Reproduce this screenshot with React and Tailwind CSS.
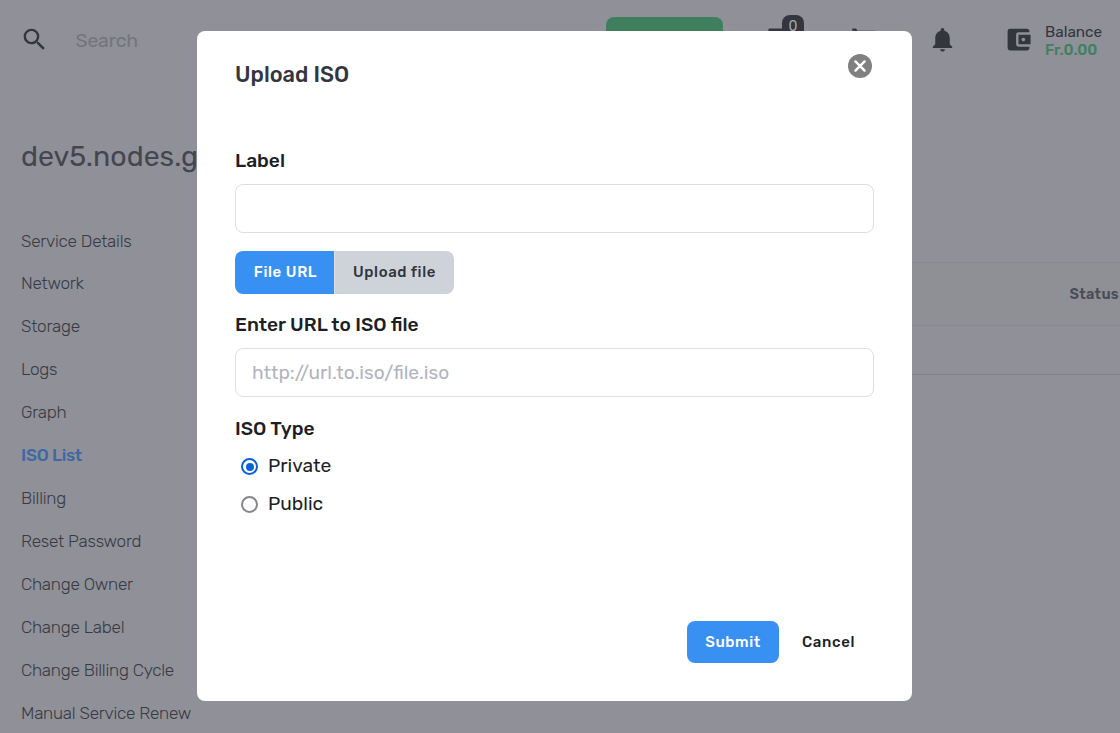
import React, { useState } from 'react';
import {
  MdSearch,
  MdForum,
  MdShoppingCart,
  MdNotifications,
  MdAccountBalanceWallet,
} from 'react-icons/md';

const menuItems = [
  'Service Details',
  'Network',
  'Storage',
  'Logs',
  'Graph',
  'ISO List',
  'Billing',
  'Reset Password',
  'Change Owner',
  'Change Label',
  'Change Billing Cycle',
  'Manual Service Renew',
];

const Header = () => (
  <header className="flex h-20 shrink-0 items-center pl-5 text-[#33363f]">
    <MdSearch size={29} className="mb-px shrink-0" />
    <span className="ml-[26.5px] w-[530.5px] pt-px text-[19.4px] tracking-[-0.15px] text-[#73757d]">Search</span>
    <button type="button" aria-label="Order" className="h-[46px] w-[117px] shrink-0 rounded-lg bg-[#407f5e]" />
    <div className="relative ml-[43px] shrink-0">
      <MdForum size={29} />
      <span className="absolute -top-[11px] left-4 flex h-6 w-[22px] justify-center rounded-lg bg-[#33363f] pt-[3px] text-[14px] leading-[18px] text-[#a3a5ab]">
        0
      </span>
    </div>
    <MdShoppingCart size={29} className="ml-14 shrink-0" />
    <MdNotifications size={29} className="mb-px ml-12 shrink-0" />
    <MdAccountBalanceWallet size={29} className="mb-px ml-[47px] shrink-0" />
    <div className="ml-3 pt-0.5 text-[15.3px] leading-[18px] whitespace-nowrap">
      <p>Balance</p>
      <p className="font-medium text-[#407f5e]">Fr.0.00</p>
    </div>
  </header>
);

const Sidebar = () => (
  <nav className="flex w-[213px] shrink-0 flex-col pt-[0.5px] pl-[21px]">
    {menuItems.map((label) => (
      <a
        key={label}
        href="#"
        className={`h-[42.95px] shrink-0 text-[17.2px] leading-[43px] tracking-[-0.26px] whitespace-nowrap ${
          label === 'ISO List' ? 'font-medium text-[#3c68a6]' : 'font-light text-[#383b43]'
        }`}
      >
        {label}
      </a>
    ))}
  </nav>
);

const IsoTable = () => (
  <div className="mt-[43px] flex-1">
    <div className="flex h-16 items-center justify-end border-y border-[#88898f] bg-[#8e9095] pt-px pr-px text-[14.5px] font-semibold tracking-[0.3px] text-[#4a4d55]">
      Status
    </div>
    <div className="h-[49px] border-b border-[#808188]" />
  </div>
);

const RadioOption = ({ label, checked, onSelect }) => (
  <label className="flex h-[38px] items-center pl-1.5 text-[19.2px] text-[#1d1f26]">
    <input
      type="radio"
      name="isoType"
      checked={checked}
      onChange={onSelect}
      className="mt-px mr-2.5 size-[17px] appearance-none rounded-full border-2 border-[#84868c] bg-clip-content p-[2.5px] checked:border-[#0b62d8] checked:bg-[#0b62d8]"
    />
    {label}
  </label>
);

const CloseIcon = () => (
  <svg width="24" height="24" viewBox="0 0 24 24" fill="none">
    <circle cx="12" cy="12" r="12" fill="#808080" />
    <path d="M7.4 7.4l9.2 9.2M16.6 7.4l-9.2 9.2" stroke="#fff" strokeWidth="2.4" strokeLinecap="round" />
  </svg>
);

const UploadModal = () => {
  const [label, setLabel] = useState('');
  const [url, setUrl] = useState('');
  const [isoType, setIsoType] = useState('Private');

  const labelClass = 'text-[19.2px] leading-9 font-medium';
  const inputClass =
    'block w-full rounded-lg border border-[#dedfe2] px-4 text-[19.1px] text-[#1d1f26] outline-none placeholder:text-[#b1b4c0]';

  return (
    <div className="fixed inset-0 flex items-start pt-[31px] pl-[197px]">
      <div className="flex h-[670px] w-[715px] flex-col rounded-lg bg-white px-[38px] text-[#1d1f26]">
        <div className="flex h-28 items-start justify-between pt-[23px]">
          <h2 className="pt-1.5 text-[21.8px] leading-[30px] font-medium text-[#33353f]">Upload ISO</h2>
          <button type="button" aria-label="Close" className="mr-[2.5px]">
            <CloseIcon />
          </button>
        </div>

        <label className={labelClass}>Label</label>
        <input value={label} onChange={(e) => setLabel(e.target.value)} className={`mt-[5px] h-[49px] ${inputClass}`} />

        <div className="mt-[18px] flex h-[43px] w-[219px] overflow-hidden rounded-lg text-[15px] font-[460]">
          <button type="button" className="w-[99px] bg-[#3990f3] pl-0.5 tracking-[0.6px] text-white">File URL</button>
          <button type="button" className="flex-1 border-l border-[#dde0e5] bg-[#ced3da] tracking-[0.6px] text-[#33353f]">
            Upload file
          </button>
        </div>

        <label className={`mt-[13px] ${labelClass}`}>Enter URL to ISO file</label>
        <input
          value={url}
          onChange={(e) => setUrl(e.target.value)}
          placeholder="http://url.to.iso/file.iso"
          className={`mt-[5px] h-[49px] ${inputClass}`}
        />

        <p className={`mt-3.5 ${labelClass}`}>ISO Type</p>
        {['Private', 'Public'].map((type) => (
          <RadioOption key={type} label={type} checked={isoType === type} onSelect={() => setIsoType(type)} />
        ))}

        <div className="mt-auto mb-[38px] flex h-[42px] justify-end text-[15px] font-[460] tracking-[0.6px]">
          <button type="button" className="w-[92px] rounded-lg bg-[#3990f3] text-white">Submit</button>
          <button type="button" className="w-[95px] pl-1">Cancel</button>
        </div>
      </div>
    </div>
  );
};

const App = () => (
  <div className="flex h-[733px] w-[1120px] flex-col overflow-hidden bg-[#8f9098] font-['Rubik','Roboto',sans-serif]">
    <Header />
    <h1 className="mt-14 shrink-0 pl-[21px] text-[28.5px] leading-10 text-[#43464e]">dev5.nodes.g</h1>
    <div className="mt-[43px] flex">
      <Sidebar />
      <IsoTable />
    </div>
    <UploadModal />
  </div>
);

export default App;
